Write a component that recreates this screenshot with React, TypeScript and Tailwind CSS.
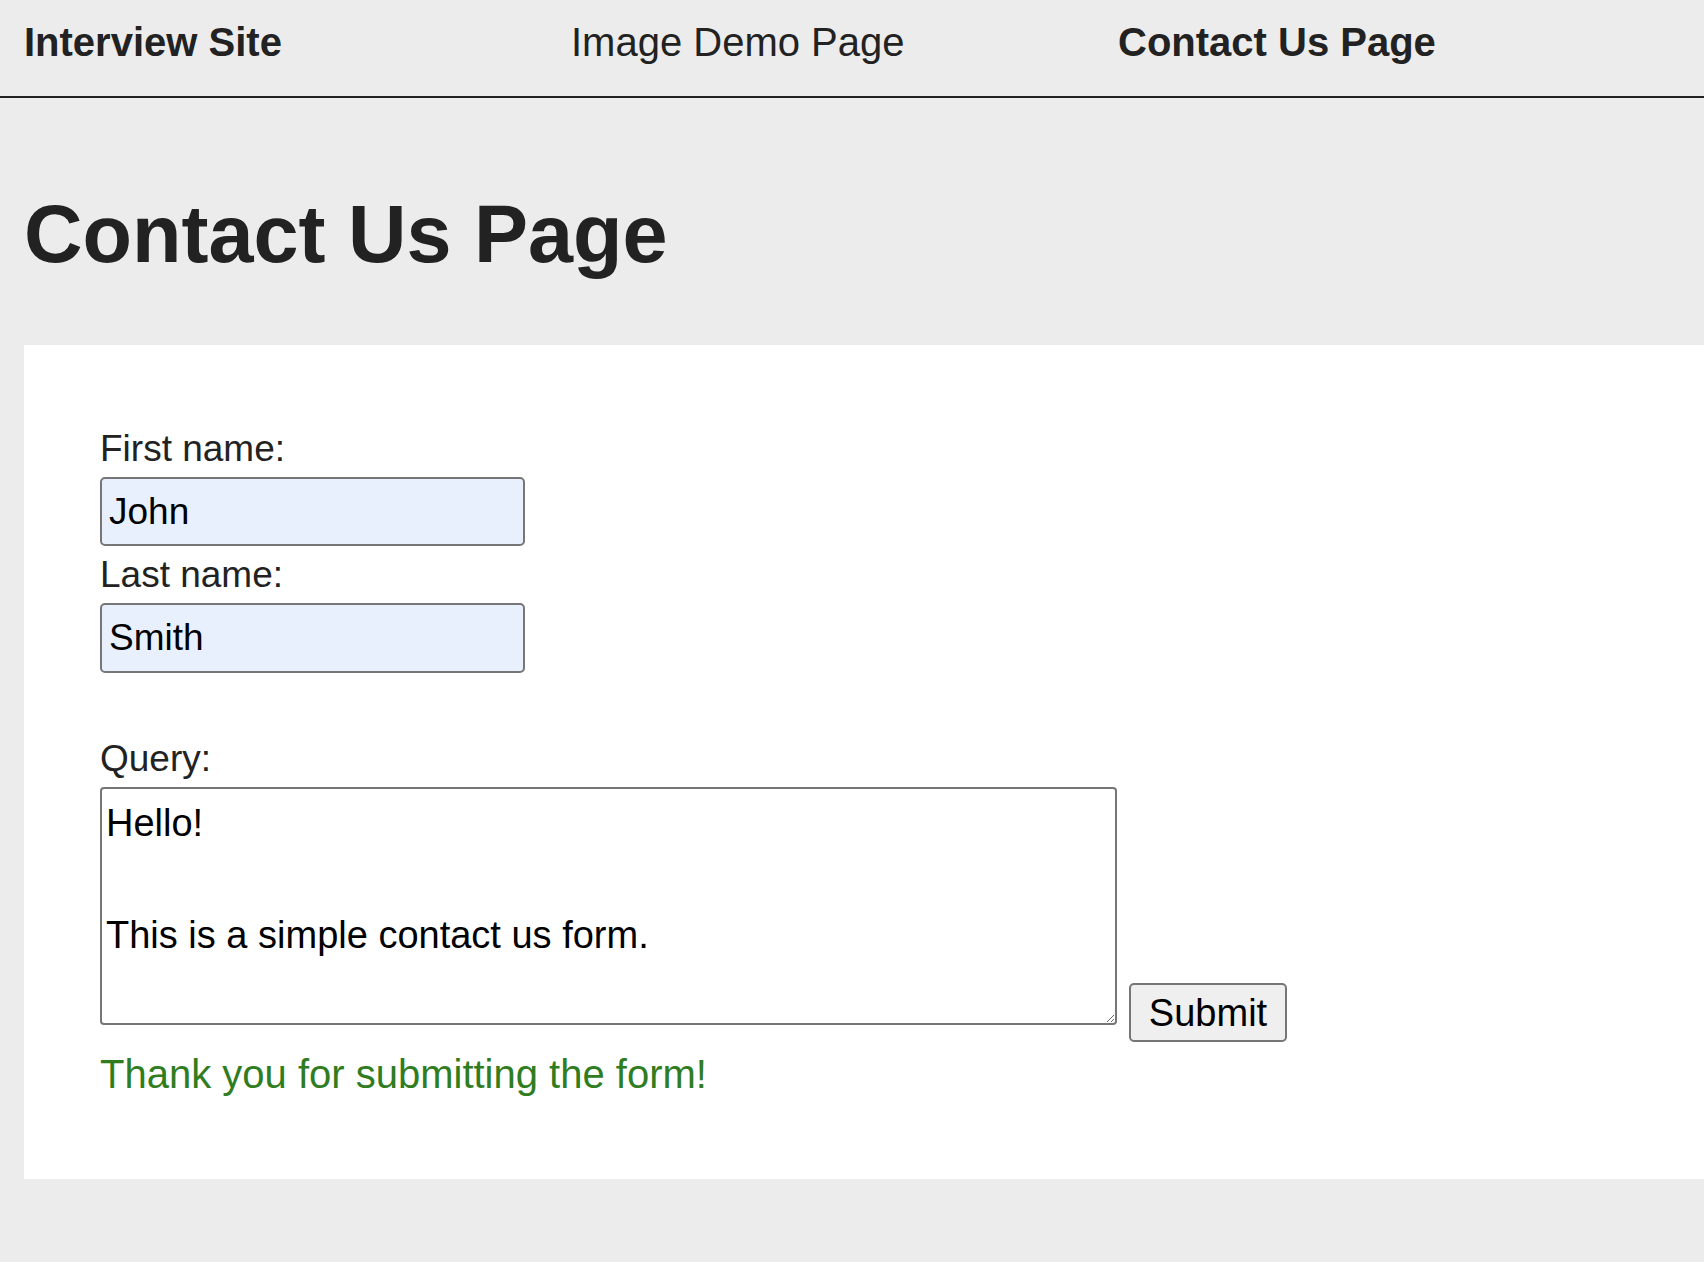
const navItems = [
    { label: "Interview Site", bold: true },
    { label: "Image Demo Page", bold: false },
    { label: "Contact Us Page", bold: true }
];

const Field = ({ label, value, height }: { label: string; value: string; height: string }) => {
    return (
        <>
            <label className="block leading-[57px] text-[37px]">{label}</label>
            <input
                type="text"
                defaultValue={value}
                className={`${height} bg-[#e8f0fe] block border-2 border-[#767676] outline-none px-[7px] rounded-[5px] text-[37px] text-black w-[425px]`}
            />
        </>
    );
};

const App = () => {
    return (
        <div className="bg-[#ececec] font-['Liberation_Sans',Arial,sans-serif] min-h-screen text-[#222]">
            <nav className="border-[#222] border-b-2 flex h-[98px] pl-[24px] pt-[22px]">
                {navItems.map((item) => (
                    <a
                        key={item.label}
                        href="#"
                        className={`${item.bold ? "font-bold" : "font-normal"} leading-[40px] text-[40px] w-[547px]`}
                    >
                        {item.label}
                    </a>
                ))}
            </nav>

            <h1 className="font-bold leading-[80px] ml-6 mt-[96px] text-[81px]">Contact Us Page</h1>

            <div className="bg-white ml-6 mt-[71px] pb-[77px] pl-[76px] pt-[75px]">
                <form onSubmit={(e) => e.preventDefault()}>
                    <Field label="First name:" value="John" height="h-[69px]" />
                    <Field label="Last name:" value="Smith" height="h-[70px]" />

                    <div className="h-[57px]" />

                    <label className="block leading-[57px] text-[37px]">Query:</label>
                    <div className="flex items-start">
                        <textarea
                            defaultValue={"Hello!\n\nThis is a simple contact us form."}
                            className="bg-white block border-2 border-[#767676] h-[238px] leading-[56px] outline-none pt-[6px] px-[4px] rounded-[4px] text-[38px] text-black w-[1017px]"
                        />
                        <button
                            type="submit"
                            className="bg-[#efefef] border-2 border-[#767676] h-[59px] ml-[12px] mt-[196px] rounded-[5px] text-[38px] text-black w-[158px]"
                        >
                            Submit
                        </button>
                    </div>

                    <p className="leading-[56px] mt-[4px] text-[#2f7d1f] text-[40px]">
                        Thank you for submitting the form!
                    </p>
                </form>
            </div>
        </div>
    );
};

export default App;
